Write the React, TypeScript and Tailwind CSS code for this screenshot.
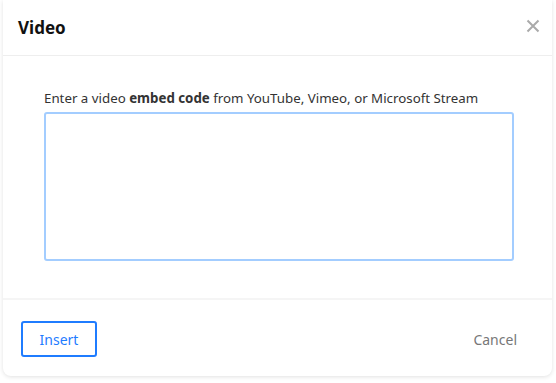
import React from "react";

export default function App() {
  return (
    <div className="w-[556px] h-[383px] bg-white" style={{ fontFamily: '"Noto Sans", sans-serif' }}>
      <div className="ml-[3px] w-[549px] h-[376px] bg-white rounded-b-[8px] shadow-[0_1px_4px_rgba(0,0,0,0.12)] flex flex-col">
        <div className="h-[56px] border-b border-[#eeeeee] flex items-center justify-between pl-[15px] pr-[12px]">
          <span className="text-[17px] font-bold text-[#111] leading-none">Video</span>
          <svg width="14" height="14" viewBox="0 0 14 14" className="mb-[3px]">
            <path d="M1.5 1.5 L12.5 12.5 M12.5 1.5 L1.5 12.5" stroke="#aaaaaa" strokeWidth="2" />
          </svg>
        </div>
        <div className="flex-1 px-[41px] pt-[33px]">
          <div className="text-[13.3px] text-[#333] leading-[18px]">
            Enter a video <span className="font-bold">embed code</span> from YouTube, Vimeo, or Microsoft Stream
          </div>
          <textarea className="mt-[5px] w-[470px] h-[149px] border-2 border-[#a3cdff] rounded-[3px] outline-none resize-none block" />
        </div>
        <div className="h-[78px] border-t-2 border-[#f5f5f5] flex items-center justify-between pl-[18px] pr-[35px]">
          <button className="w-[76px] h-[36px] border-2 border-[#1f7cff] rounded-[3px] text-[14px] text-[#1f7cff] mt-[2px]">Insert</button>
          <span className="text-[14px] text-[#777] mt-[2px]">Cancel</span>
        </div>
      </div>
    </div>
  );
}
